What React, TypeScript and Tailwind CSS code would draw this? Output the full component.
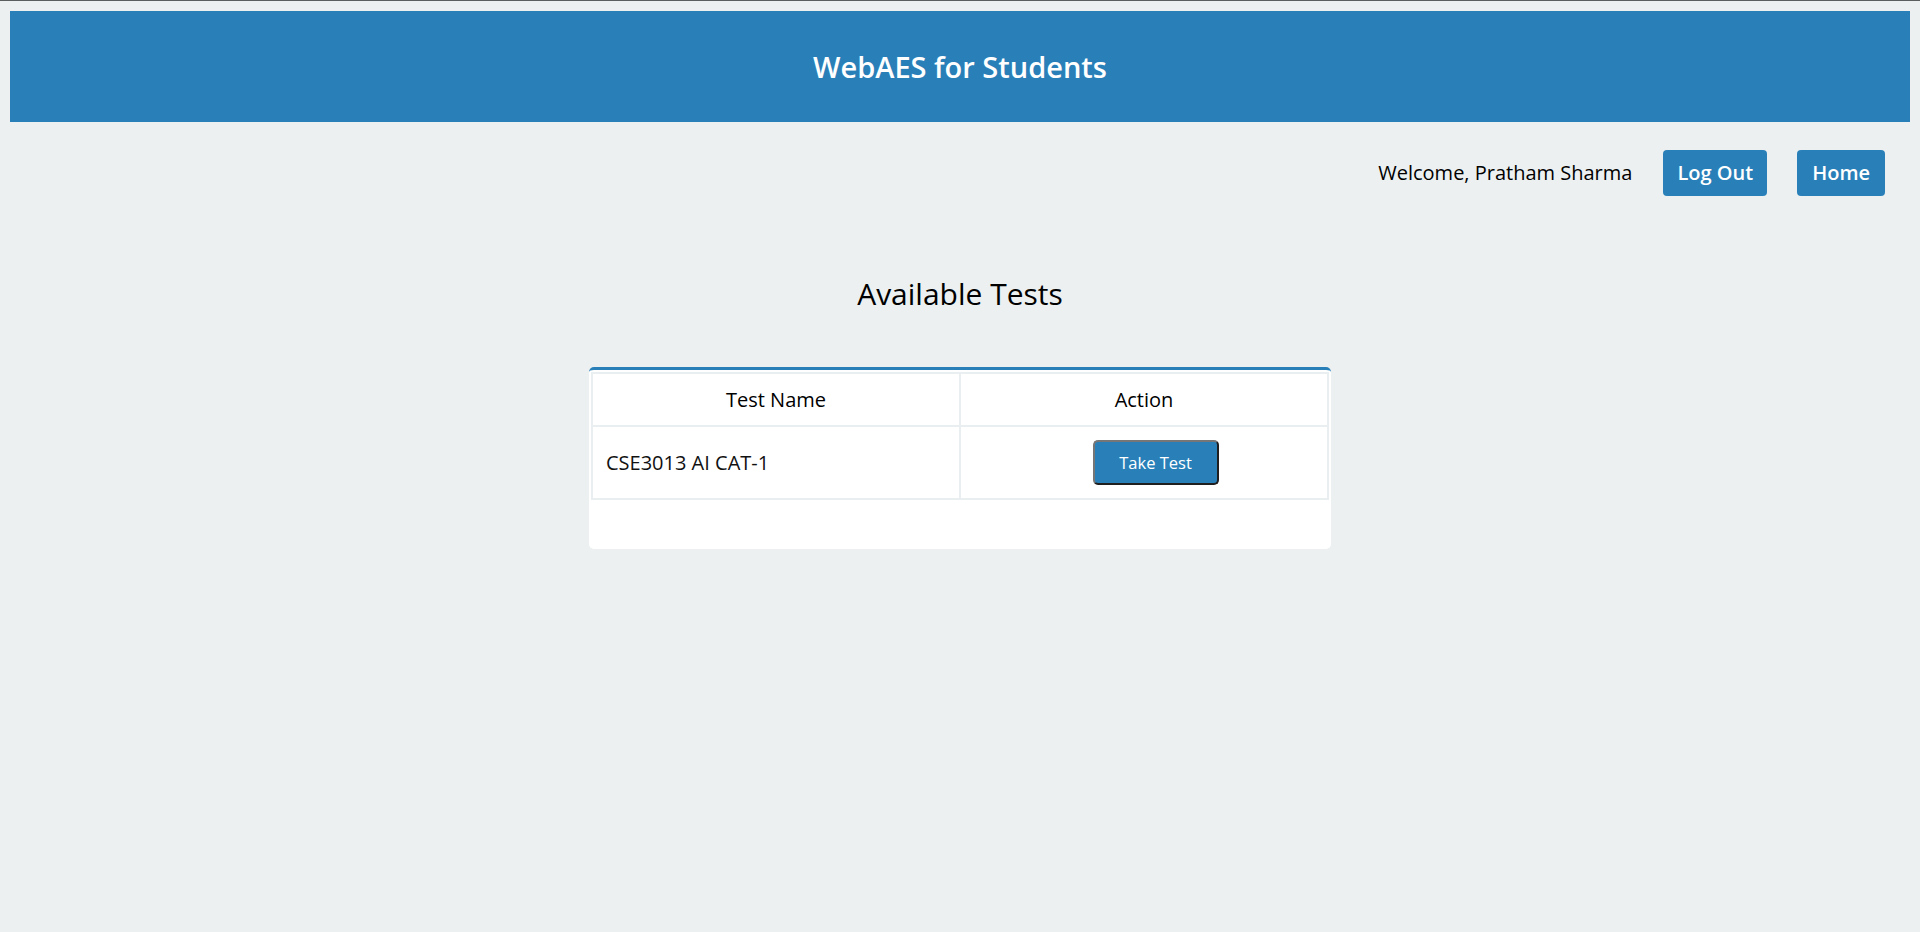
import React from "react";

export default function App() {
  return (
    <div
      className="min-h-[932px] w-full bg-[#ecf0f1] border-t border-[#5b5e60] text-black"
      style={{ fontFamily: '"Open Sans", "Noto Sans", sans-serif' }}
    >
      <div className="px-[10px] pt-[10px]">
        <header className="h-[111px] bg-[#2980b9] flex items-center justify-center">
          <h1 className="text-white text-[29px] font-semibold leading-[40px]">WebAES for Students</h1>
        </header>

        <div className="mt-[28px] flex items-center justify-end pr-[25px]">
          <span className="text-[20px] leading-[26px]">Welcome, Pratham Sharma</span>
          <button className="ml-[31px] bg-[#2980b9] text-white text-[20px] font-semibold leading-[26px] px-[14px] py-[10px] rounded-[4px]">
            Log Out
          </button>
          <button className="ml-[30px] bg-[#2980b9] text-white text-[20px] font-semibold leading-[26px] px-[15px] py-[10px] rounded-[4px]">
            Home
          </button>
        </div>

        <h2 className="mt-[77px] text-center text-[30px] leading-[41px] font-normal">Available Tests</h2>

        <div className="mt-[53px] mx-auto w-[742px] bg-white rounded-[5px] border-t-[3px] border-[#2980b9] px-[2px] pt-[2px] pb-[49px]">
          <table className="w-full border-collapse border-2 border-[#e9eef0] table-fixed">
            <thead>
              <tr>
                <th className="border-2 border-[#e9eef0] px-[13px] py-[12px] text-[20px] leading-[27px] font-normal text-center">Test Name</th>
                <th className="border-2 border-[#e9eef0] px-[13px] py-[12px] text-[20px] leading-[27px] font-normal text-center">Action</th>
              </tr>
            </thead>
            <tbody>
              <tr>
                <td className="border-2 border-[#e9eef0] p-[13px] text-[20px] leading-[27px] text-[#111]">CSE3013 AI CAT-1</td>
                <td className="border-2 border-[#e9eef0] p-[13px]">
                  <div className="flex justify-center">
                    <button className="ml-[23px] w-[126px] h-[45px] bg-[#2980b9] text-white text-[16.5px] leading-[22px] rounded-[5px] border-2 border-t-[#767676] border-l-[#767676] border-b-[#1f1f1f] border-r-[#1f1f1f]">
                      Take Test
                    </button>
                  </div>
                </td>
              </tr>
            </tbody>
          </table>
        </div>
      </div>
    </div>
  );
}
